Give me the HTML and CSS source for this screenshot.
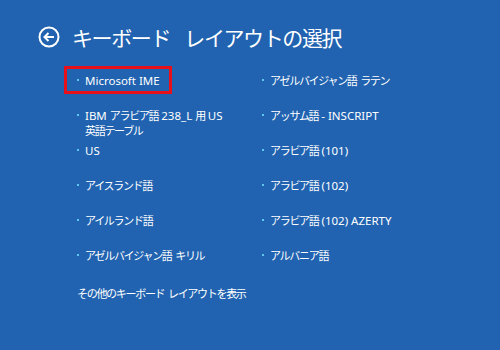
FILE: index.html
```html
<!DOCTYPE html>
<html lang="ja">
<head>
<meta charset="utf-8">
<title>キーボード レイアウトの選択</title>
<link rel="stylesheet" href="styles.css">
</head>
<body>
<div class="page">
  <div class="header">
    <svg class="back" width="22" height="22" viewBox="0 0 22 22" aria-hidden="true">
      <circle cx="11" cy="11" r="9.5" fill="none" stroke="#fff" stroke-width="2"/>
      <path d="M16 11H6.5M10.5 7L6.5 11L10.5 15" fill="none" stroke="#fff" stroke-width="2" stroke-linejoin="miter"/>
    </svg>
    <h1 class="title">キーボード レイアウトの選択</h1>
  </div>
  <ul class="list">
    <li class="item"><span class="dot"></span><span class="label selected">Microsoft IME</span></li>
    <li class="item"><span class="dot"></span><span class="label">IBM <span class="ja">アラビア語</span> 238_L <span class="ja">用</span> US<br><span class="ja">英語テーブル</span></span></li>
    <li class="item"><span class="dot"></span><span class="label">US</span></li>
    <li class="item"><span class="dot"></span><span class="label"><span class="ja">アイスランド語</span></span></li>
    <li class="item"><span class="dot"></span><span class="label"><span class="ja">アイルランド語</span></span></li>
    <li class="item"><span class="dot"></span><span class="label"><span class="ja">アゼルバイジャン語 キリル</span></span></li>
    <li class="item"><span class="dot"></span><span class="label"><span class="ja">アゼルバイジャン語 ラテン</span></span></li>
    <li class="item"><span class="dot"></span><span class="label"><span class="ja">アッサム語</span> - INSCRIPT</span></li>
    <li class="item"><span class="dot"></span><span class="label"><span class="ja">アラビア語</span> (101)</span></li>
    <li class="item"><span class="dot"></span><span class="label"><span class="ja">アラビア語</span> (102)</span></li>
    <li class="item"><span class="dot"></span><span class="label"><span class="ja">アラビア語</span> (102) AZERTY</span></li>
    <li class="item"><span class="dot"></span><span class="label"><span class="ja">アルバニア語</span></span></li>
  </ul>
  <div class="more"><span class="ja">その他のキーボード レイアウトを表示</span></div>
</div>
</body>
</html>
```

FILE: styles.css
```css
html, body {
  margin: 0;
  padding: 0;
}
body {
  width: 500px;
  height: 350px;
  overflow: hidden;
  background: #2163b0;
  color: #fff;
  font-family: "Noto Sans", "Noto Sans CJK JP", sans-serif;
}
.page {
  padding: 26px 0 0 38px;
}
.header {
  display: flex;
  align-items: center;
  height: 22px;
  gap: 12px;
}
.back {
  display: block;
  flex: none;
}
.title {
  margin: 0;
  font-family: "Noto Sans CJK JP", sans-serif;
  font-weight: 400;
  font-size: 21px;
  letter-spacing: -1.4px;
  word-spacing: 11px;
  line-height: 22px;
}
.list {
  list-style: none;
  margin: 24.5px 0 0 37px;
  padding: 0;
  display: grid;
  grid-template-columns: 185px 185px;
  grid-template-rows: repeat(6, 35px);
  grid-auto-flow: column;
}
.item {
  display: flex;
  align-items: flex-start;
  font-size: 11.5px;
  line-height: 15px;
}
.dot {
  flex: none;
  width: 2px;
  height: 2px;
  margin: 6px 6px 0 2px;
  background: #5cc8f0;
}
.label {
  white-space: nowrap;
}
.selected {
  position: relative;
}
.selected::after {
  content: "";
  position: absolute;
  left: -21px;
  right: -12px;
  top: -7px;
  bottom: -6px;
  border: 3px solid #e8101a;
}
.ja {
  font-family: "Noto Sans CJK JP", sans-serif;
  font-size: 11px;
  letter-spacing: -1.3px;
  word-spacing: 2.5px;
}
.more {
  margin: 3px 0 0 39px;
  line-height: 15px;
  font-size: 11.5px;
}
```
